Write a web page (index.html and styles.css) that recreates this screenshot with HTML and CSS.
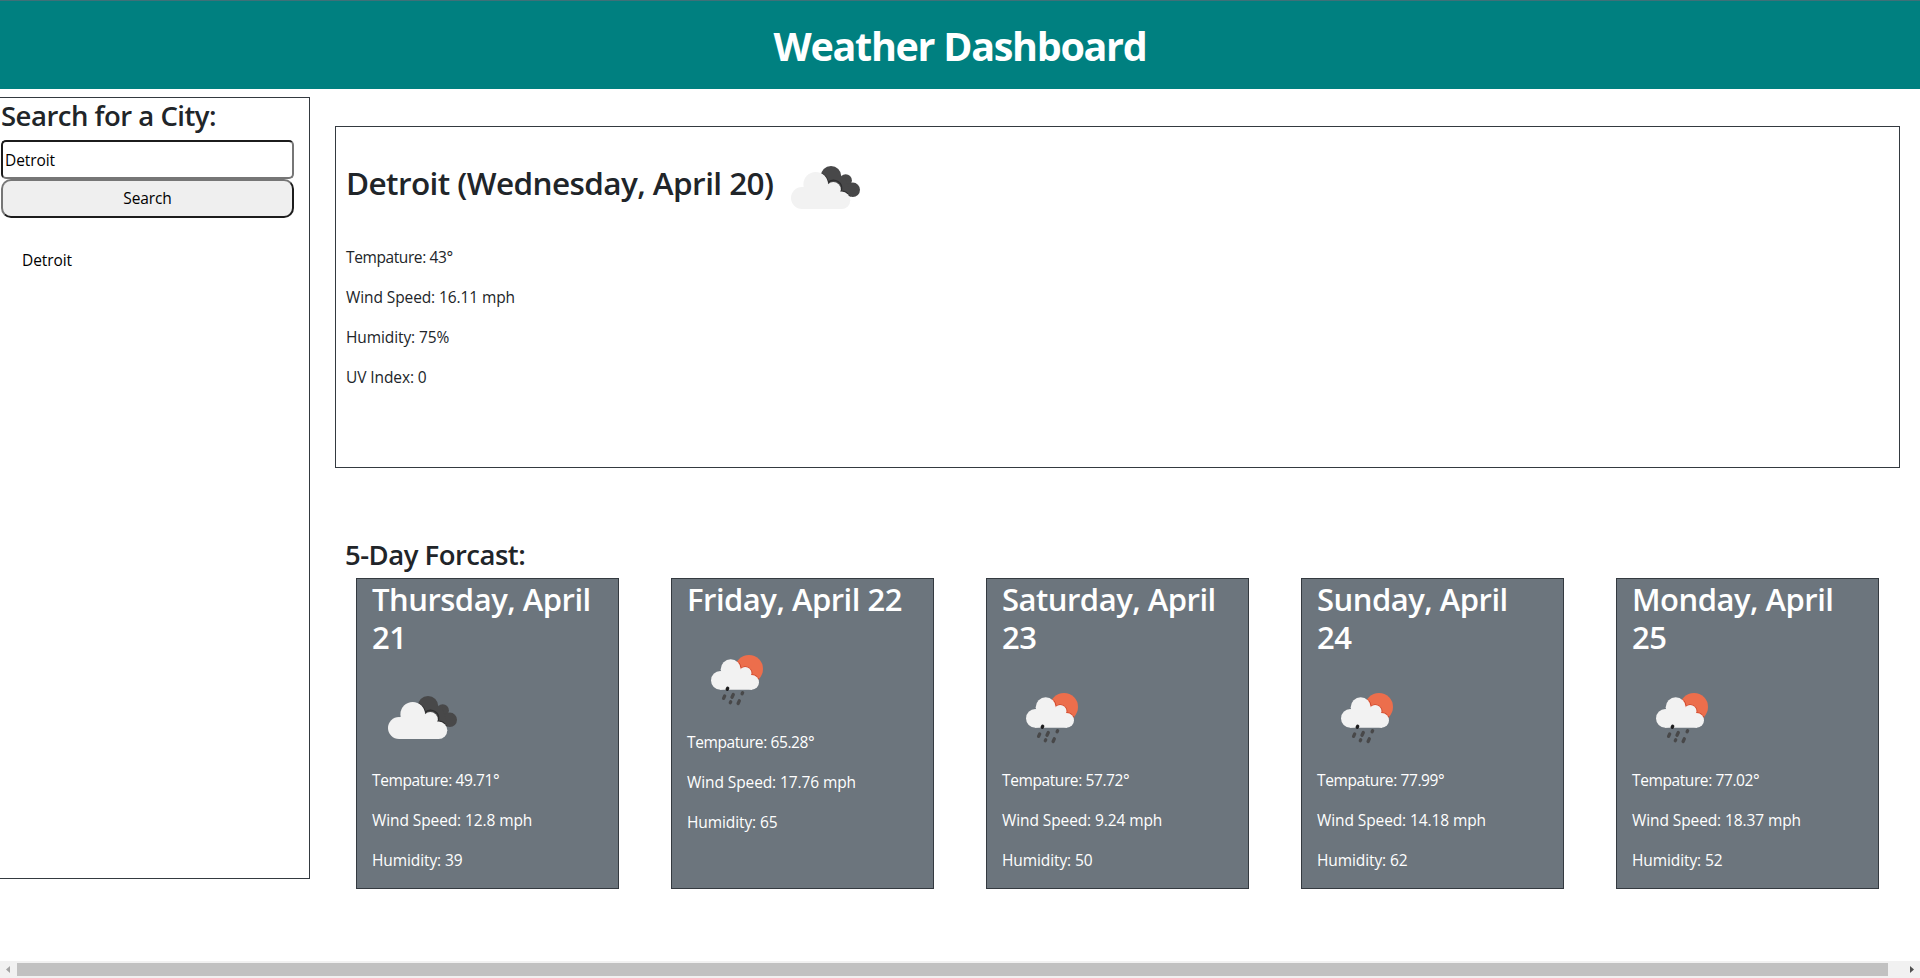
FILE: index.html
```html
<!DOCTYPE html>
<html lang="en">
<head>
<meta charset="utf-8">
<title>Weather Dashboard</title>
<link rel="stylesheet" href="styles.css">
</head>
<body>
<svg class="defs" aria-hidden="true">
  <symbol id="clouds" viewBox="0 0 100 100">
    <g fill="#484849"><circle cx="56" cy="39.3" r="10.3"/><circle cx="70.7" cy="43.5" r="6.2"/><circle cx="77.8" cy="52.8" r="7.2"/><path d="M50 40H70L76 59.5 66 58Z"/></g>
    <g fill="none" stroke="#2d2d2e" stroke-width="1.2"><path d="M46.5 36.5A12.8 12.8 0 0 1 53.3 45.3M53.3 45.3A8 8 0 0 1 66.2 53.9M66.2 54.2A9.3 9.3 0 0 1 74.3 59"/></g>
    <g fill="#f2f2f2"><circle cx="27" cy="61" r="11"/><circle cx="40.7" cy="47.3" r="12.3"/><circle cx="58.3" cy="52.5" r="7.5"/><circle cx="66.6" cy="63.3" r="8.7"/><path d="M28 50H58L67 58V72H27Z"/></g>
  </symbol>
  <symbol id="sunrain" viewBox="0 0 100 100">
    <circle cx="62" cy="40" r="14" fill="#ec6e4c"/>
    <g fill="none" stroke="#cf4a30" stroke-width="1"><path d="M51 32.5A10.6 10.6 0 0 1 54 39.3M54 39.3A6.6 6.6 0 0 1 64.7 45.8M64.7 45.8A7.8 7.8 0 0 1 72 50.5"/></g>
    <g fill="#f2f2f2"><circle cx="33.3" cy="51.4" r="9.3"/><circle cx="43.7" cy="40.3" r="10"/><circle cx="58.2" cy="44.2" r="6.2"/><circle cx="64.7" cy="53.4" r="7.3"/><path d="M34 43H58L65 50V60.7H33Z"/></g>
    <g fill="none" stroke="#484849" stroke-width="3.3" stroke-linecap="round"><path d="M55.6 63.8L55.1 64.8M37.7 66.9L36.6 69.4M46.3 65.5L45 68.3M43.7 72.8L43.3 73.7M52.3 71.8L51.1 74.5"/><path stroke="#1d1d1e" d="M40.7 59.2L40.2 60.3"/></g>
  </symbol>
</svg>

<header class="banner"><h1>Weather Dashboard</h1></header>

<main class="layout">
  <aside class="sidebar">
    <h3 class="section-title">Search for a City:</h3>
    <input class="city" type="text" value="Detroit">
    <button class="search">Search</button>
    <p class="history">Detroit</p>
  </aside>

  <section class="content">
    <article class="current">
      <div class="current-head"><h2>Detroit (Wednesday, April 20)</h2><svg class="icon"><use href="#clouds"/></svg></div>
      <p class="temp">Tempature: 43°</p>
      <p>Wind Speed: 16.11 mph</p>
      <p>Humidity: 75%</p>
      <p>UV Index: 0</p>
    </article>

    <h3 class="section-title forecast-title">5-Day Forcast:</h3>
    <div class="forecast">
      <article class="card"><h2>Thursday, April<br>21</h2><svg class="icon"><use href="#clouds"/></svg><p class="temp">Tempature: 49.71°</p><p>Wind Speed: 12.8 mph</p><p>Humidity: 39</p></article>
      <article class="card"><h2>Friday, April 22</h2><svg class="icon"><use href="#sunrain"/></svg><p class="temp">Tempature: 65.28°</p><p>Wind Speed: 17.76 mph</p><p>Humidity: 65</p></article>
      <article class="card"><h2>Saturday, April<br>23</h2><svg class="icon"><use href="#sunrain"/></svg><p class="temp">Tempature: 57.72°</p><p>Wind Speed: 9.24 mph</p><p>Humidity: 50</p></article>
      <article class="card"><h2>Sunday, April<br>24</h2><svg class="icon"><use href="#sunrain"/></svg><p class="temp">Tempature: 77.99°</p><p>Wind Speed: 14.18 mph</p><p>Humidity: 62</p></article>
      <article class="card"><h2>Monday, April<br>25</h2><svg class="icon"><use href="#sunrain"/></svg><p class="temp">Tempature: 77.02°</p><p>Wind Speed: 18.37 mph</p><p>Humidity: 52</p></article>
    </div>
  </section>
</main>

<div class="scrollbar">
  <svg class="arrow" viewBox="0 0 17 17"><path d="M10 5V12L6 8.5Z" fill="#a3a3a3"/></svg>
  <div class="thumb"></div>
  <svg class="arrow" viewBox="0 0 17 17"><path d="M7 5V12L11 8.5Z" fill="#505050"/></svg>
</div>
</body>
</html>
```
FILE: styles.css
```css
* { box-sizing: border-box; }

body {
  margin: 0;
  height: 978px;
  display: flex;
  flex-direction: column;
  overflow: hidden;
  background: #fff;
  color: #212529;
  font: 400 15.5px/24px "Open Sans", "Noto Sans", sans-serif;
  letter-spacing: -0.1px;
}

h1, h2, h3, p { margin: 0; white-space: nowrap; }

.defs { position: absolute; width: 0; height: 0; }

.banner {
  height: 89px;
  flex: none;
  padding-top: 15px;
  border-top: 1px solid #3f7078;
  background: #008080;
  color: #fff;
  text-align: center;
}
h1 { font-size: 39.5px; line-height: 60px; font-weight: 700; letter-spacing: -1.3px; }
h2 { font-size: 31px; line-height: 38px; font-weight: 550; letter-spacing: -0.5px; }

.section-title { font-size: 27.5px; line-height: 34px; font-weight: 550; letter-spacing: -0.5px; }

.layout { flex: 1; display: flex; align-items: flex-start; padding-top: 8px; }

.sidebar {
  width: 310px;
  height: 782px;
  flex: none;
  display: flex;
  flex-direction: column;
  align-items: flex-start;
  padding: 1px 0 0 1px;
  border: 1px solid #343a40;
  border-left: 0;
}
.city, .search {
  width: 293px;
  height: 39px;
  font: inherit;
  letter-spacing: inherit;
  color: #000;
}
.city {
  margin: 7px 0 0;
  padding: 1px 2px;
  background: #fff;
  border: 2px solid;
  border-color: #1c1c1c #767676 #767676 #1c1c1c;
  border-radius: 5px;
}
.search {
  padding: 0 6px 2px;
  background: #efefef;
  border: 2px solid;
  border-color: #767676 #1c1c1c #1c1c1c #767676;
  border-radius: 10px;
}
.history { margin: 30px 0 0 21px; color: #000; }

.content { width: 1565px; margin: 29px 0 0 25px; }

.current {
  height: 342px;
  padding: 10px;
  border: 1px solid #343a40;
}
.current-head { display: flex; height: 108px; }
.current-head h2 { padding-top: 27px; width: 429px; font-size: 31.5px; letter-spacing: -0.58px; }
.icon { display: block; width: 100px; height: 100px; }
.current p { margin-bottom: 16px; }
.temp { letter-spacing: -0.4px; }

.forecast-title { margin: 70px 0 6px 10px; }
.forecast {
  display: grid;
  grid-template-columns: repeat(5, 263px);
  column-gap: 52px;
  padding-left: 21px;
}
.card {
  height: 311px;
  padding: 1px 15px;
  border: 1px solid #343a40;
  background: #6c757d;
  color: #fff;
}
.card .icon { margin: 11px 0 1px; }
.card p { margin-bottom: 16px; }

.scrollbar { display: flex; height: 17px; flex: none; background: #f1f1f1; }
.arrow { width: 17px; height: 17px; }
.thumb { width: 1871px; height: 13px; margin: 2px 15px 2px 0; background: #c1c1c1; }
```
